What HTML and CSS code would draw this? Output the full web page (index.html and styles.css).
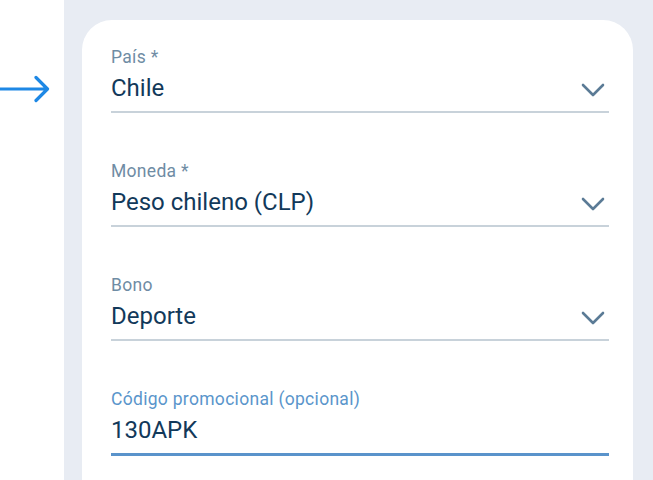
FILE: index.html
```html
<!DOCTYPE html>
<html lang="es">
<head>
<meta charset="utf-8">
<link rel="stylesheet" href="styles.css">
</head>
<body>
<div class="page">
  <div class="side">
    <svg class="arrow" width="52" height="28" viewBox="0 0 52 28">
      <path d="M1.5 14 H48 M37 2.5 L48.5 14 L37 25.5" fill="none" stroke="#1e88e5" stroke-width="3.2" stroke-linecap="round" stroke-linejoin="round"/>
    </svg>
  </div>
  <div class="panel">
    <div class="card">
      <div class="field">
        <div class="label">País *</div>
        <div class="row"><span class="value">Chile</span>
          <svg class="chev" width="24" height="14" viewBox="0 0 24 14"><path d="M2 2 L12 12 L22 2" fill="none" stroke="#5b7b96" stroke-width="2.6" stroke-linecap="round" stroke-linejoin="round"/></svg>
        </div>
      </div>
      <div class="field">
        <div class="label">Moneda *</div>
        <div class="row"><span class="value">Peso chileno (CLP)</span>
          <svg class="chev" width="24" height="14" viewBox="0 0 24 14"><path d="M2 2 L12 12 L22 2" fill="none" stroke="#5b7b96" stroke-width="2.6" stroke-linecap="round" stroke-linejoin="round"/></svg>
        </div>
      </div>
      <div class="field">
        <div class="label">Bono</div>
        <div class="row"><span class="value">Deporte</span>
          <svg class="chev" width="24" height="14" viewBox="0 0 24 14"><path d="M2 2 L12 12 L22 2" fill="none" stroke="#5b7b96" stroke-width="2.6" stroke-linecap="round" stroke-linejoin="round"/></svg>
        </div>
      </div>
      <div class="field focused">
        <div class="label">Código promocional (opcional)</div>
        <div class="row"><span class="value">130APK</span></div>
      </div>
    </div>
  </div>
</div>
</body>
</html>
```
FILE: styles.css
```css
html, body {
  margin: 0;
  padding: 0;
  background: #ffffff;
  font-family: Roboto, "Noto Sans", sans-serif;
}
.page {
  display: flex;
  width: 653px;
  height: 480px;
  overflow: hidden;
}
.side {
  width: 64px;
  flex: none;
  display: flex;
  flex-direction: column;
}
.arrow {
  display: block;
  margin-top: 75px;
  margin-left: -1px;
}
.panel {
  flex: 1;
  background: #e8ecf3;
  padding: 20px 20px 0 18px;
  display: flex;
}
.card {
  flex: 1;
  background: #ffffff;
  border-radius: 30px 30px 0 0;
  padding: 27px 24px 0 29px;
  display: flex;
  flex-direction: column;
  gap: 48px;
}
.field {
  border-bottom: 2px solid #c8d2da;
  padding-bottom: 9px;
}
.label {
  font-size: 17.5px;
  line-height: 20px;
  color: #6f8ca4;
  letter-spacing: 0.3px;
}
.row {
  display: flex;
  align-items: center;
  justify-content: space-between;
  margin-top: 7px;
  height: 28px;
}
.value {
  font-size: 24px;
  line-height: 28px;
  color: #12395a;
}
.chev {
  display: block;
  margin-right: 4px;
  margin-top: 3px;
}
.focused {
  border-bottom: 3px solid #5a93cb;
}
.focused .label {
  color: #5a95cb;
}
```
